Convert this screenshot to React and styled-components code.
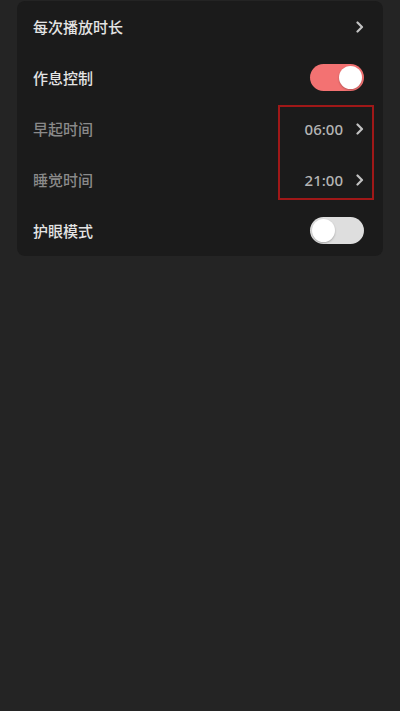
import React, { useState } from 'react'
import styled, { createGlobalStyle } from 'styled-components'

const GlobalStyle = createGlobalStyle`
  html, body {
    margin: 0;
    padding: 0;
    background: #242424;
  }
  body {
    font-family: "Noto Sans CJK SC", "Noto Sans", sans-serif;
    -webkit-font-smoothing: antialiased;
  }
`

const Page = styled.div`
  width: 400px;
  min-height: 711px;
  background: #242424;
  padding-top: 1px;
  box-sizing: border-box;
`

const Card = styled.div`
  margin: 0 17px;
  background: #1b1b1b;
  border-radius: 8px;
  position: relative;
`

const Row = styled.div`
  display: flex;
  align-items: center;
  justify-content: space-between;
  height: 51px;
  padding: 0 19px 0 16px;
`

const Label = styled.span`
  font-size: 15px;
  font-weight: 500;
  color: ${(p) => (p.dim ? '#8a8a8a' : '#e4e4e4')};
`

const Right = styled.div`
  display: flex;
  align-items: center;
  gap: 13px;
`

const Value = styled.span`
  font-family: "Noto Sans", sans-serif;
  font-size: 15px;
  font-weight: 500;
  color: #b4b4b4;
`

const Track = styled.button`
  position: relative;
  width: 54px;
  height: 27px;
  border: none;
  padding: 0;
  border-radius: 14px;
  background: ${(p) => (p.on ? '#f37272' : '#dedede')};
  cursor: pointer;
`

const Knob = styled.span`
  position: absolute;
  top: 2px;
  left: ${(p) => (p.on ? '29px' : '2px')};
  width: 23px;
  height: 23px;
  border-radius: 50%;
  background: #ffffff;
  box-shadow: 0 1px 2px rgba(0, 0, 0, 0.25);
`

const Highlight = styled.div`
  position: absolute;
  left: 261px;
  top: 104px;
  width: 92px;
  height: 91px;
  border: 2px solid #a01818;
  pointer-events: none;
`

function Chevron() {
  return (
    <svg width="8" height="12" viewBox="0 0 8 12">
      <path d="M1.5 1.5 L6 6 L1.5 10.5" fill="none" stroke="#c2c2c2" strokeWidth="2.2" strokeLinecap="round" strokeLinejoin="round" />
    </svg>
  )
}

function Toggle({ on, onClick }) {
  return (
    <Track on={on} onClick={onClick}>
      <Knob on={on} />
    </Track>
  )
}

export default function App() {
  const [rest, setRest] = useState(true)
  const [eye, setEye] = useState(false)

  return (
    <Page>
      <GlobalStyle />
      <Card>
        <Row>
          <Label>每次播放时长</Label>
          <Chevron />
        </Row>
        <Row>
          <Label>作息控制</Label>
          <Toggle on={rest} onClick={() => setRest(!rest)} />
        </Row>
        <Row>
          <Label dim>早起时间</Label>
          <Right>
            <Value>06:00</Value>
            <Chevron />
          </Right>
        </Row>
        <Row>
          <Label dim>睡觉时间</Label>
          <Right>
            <Value>21:00</Value>
            <Chevron />
          </Right>
        </Row>
        <Row>
          <Label>护眼模式</Label>
          <Toggle on={eye} onClick={() => setEye(!eye)} />
        </Row>
        <Highlight />
      </Card>
    </Page>
  )
}
